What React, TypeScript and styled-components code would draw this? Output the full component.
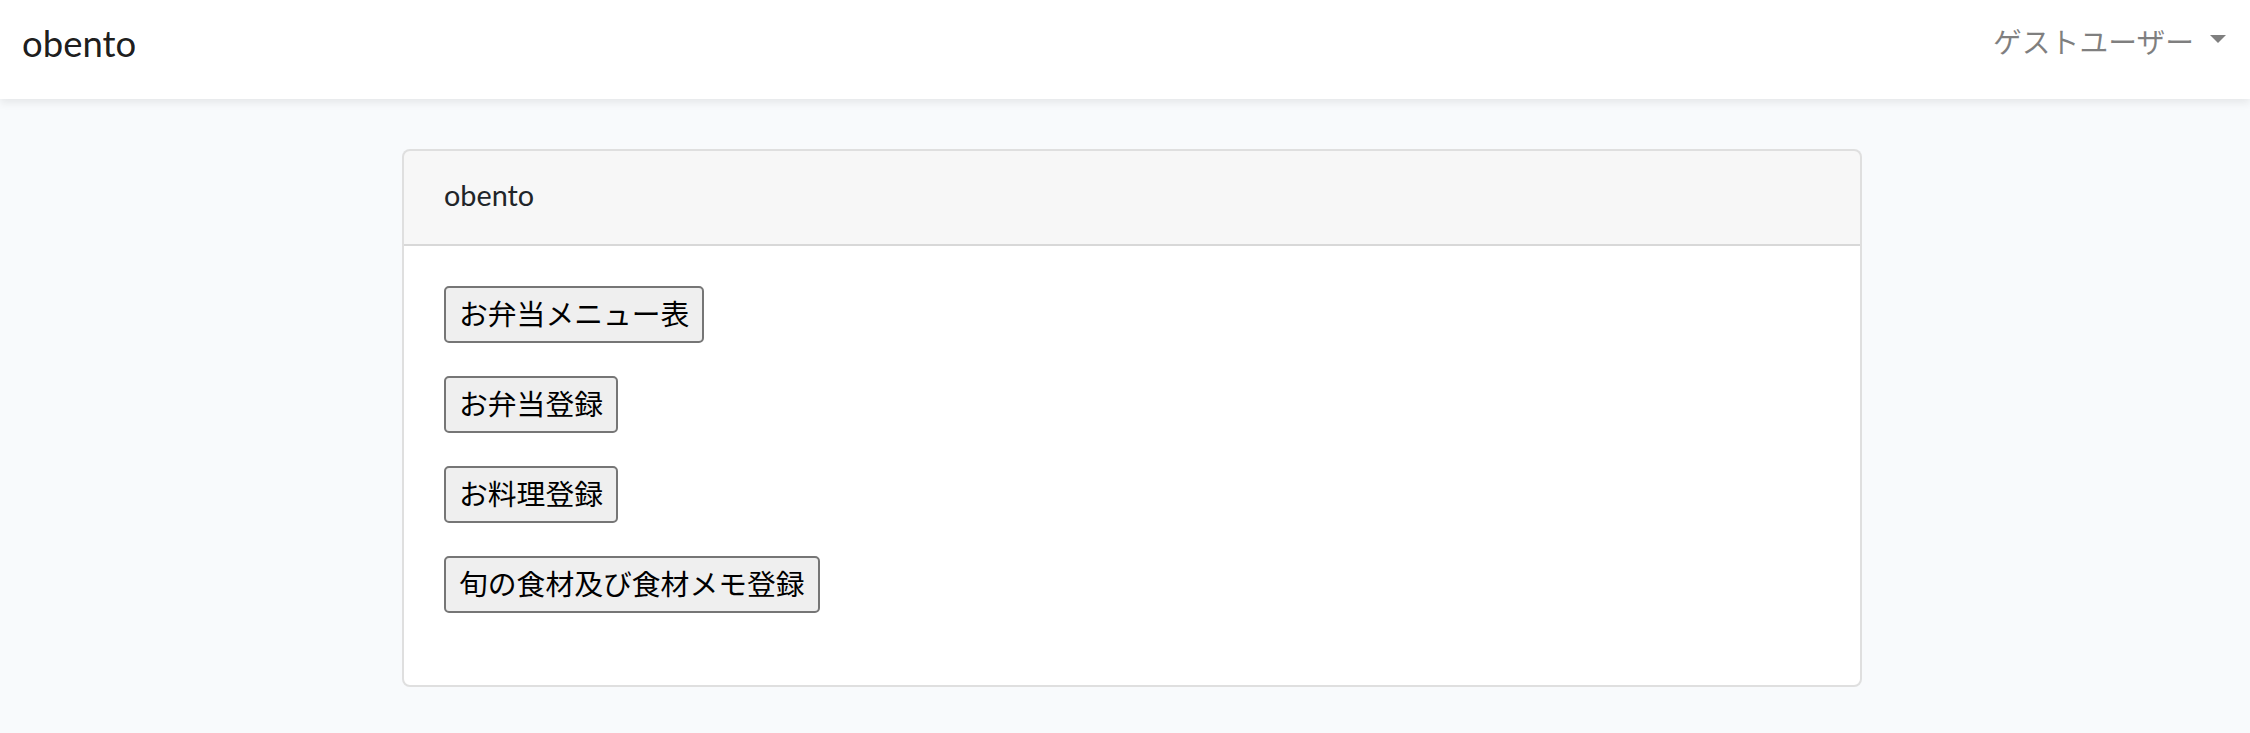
import React from "react";
import styled, { createGlobalStyle } from "styled-components";

const GlobalStyle = createGlobalStyle`
  html, body {
    margin: 0;
    padding: 0;
  }
  body {
    background: #f8fafc;
    font-family: Lato, "Noto Sans CJK JP", sans-serif;
    font-size: 28.8px;
    color: #212529;
  }
  * { box-sizing: border-box; }
`;

const Navbar = styled.nav`
  height: 99px;
  background: #ffffff;
  box-shadow: 0 4px 8px rgba(0, 0, 0, 0.075);
  display: flex;
  align-items: flex-start;
  justify-content: space-between;
  padding: 0 24px 0 22px;
  position: relative;
  z-index: 1;
`;

const Brand = styled.a`
  font-size: 36.5px;
  line-height: 57.6px;
  margin-top: 15px;
  color: rgba(0, 0, 0, 0.9);
  text-decoration: none;
`;

const UserToggle = styled.a`
  display: flex;
  align-items: center;
  margin-top: 18px;
  font-family: "Noto Sans CJK JP", sans-serif;
  font-size: 28.8px;
  line-height: 46px;
  color: rgba(0, 0, 0, 0.5);
  text-decoration: none;

  &::after {
    content: "";
    display: block;
    margin-left: 16px;
    margin-top: -4px;
    border-top: 8.6px solid rgba(0, 0, 0, 0.5);
    border-left: 8.6px solid transparent;
    border-right: 8.6px solid transparent;
  }
`;

const Main = styled.main`
  display: flex;
  justify-content: center;
  padding: 50px 0 46px 14px;
`;

const Card = styled.section`
  width: 1460px;
  background: #ffffff;
  border: 2px solid rgba(0, 0, 0, 0.125);
  border-radius: 8px;
  overflow: hidden;
`;

const CardHeader = styled.header`
  height: 95px;
  padding: 0 40px 5px;
  display: flex;
  align-items: center;
  background: rgba(0, 0, 0, 0.03);
  border-bottom: 2px solid rgba(0, 0, 0, 0.125);
  font-size: 28.8px;
`;

const CardBody = styled.div`
  padding: 40px 40px 40px;
`;

const ActionRow = styled.div`
  margin-bottom: 33px;
  &:last-child {
    margin-bottom: 32px;
  }
`;

const ActionButton = styled.button`
  height: 57px;
  padding: 0 13px 2px;
  font-family: "Noto Sans CJK JP", sans-serif;
  font-size: 28.8px;
  line-height: 1;
  color: #000000;
  background: #efefef;
  border: 2px solid #767676;
  border-radius: 5px;
  cursor: pointer;
`;

const actions = [
  "お弁当メニュー表",
  "お弁当登録",
  "お料理登録",
  "旬の食材及び食材メモ登録",
];

export default function App() {
  return (
    <>
      <GlobalStyle />
      <Navbar>
        <Brand href="#">obento</Brand>
        <UserToggle href="#">ゲストユーザー</UserToggle>
      </Navbar>
      <Main>
        <Card>
          <CardHeader>obento</CardHeader>
          <CardBody>
            {actions.map((label) => (
              <ActionRow key={label}>
                <ActionButton type="button">{label}</ActionButton>
              </ActionRow>
            ))}
          </CardBody>
        </Card>
      </Main>
    </>
  );
}
